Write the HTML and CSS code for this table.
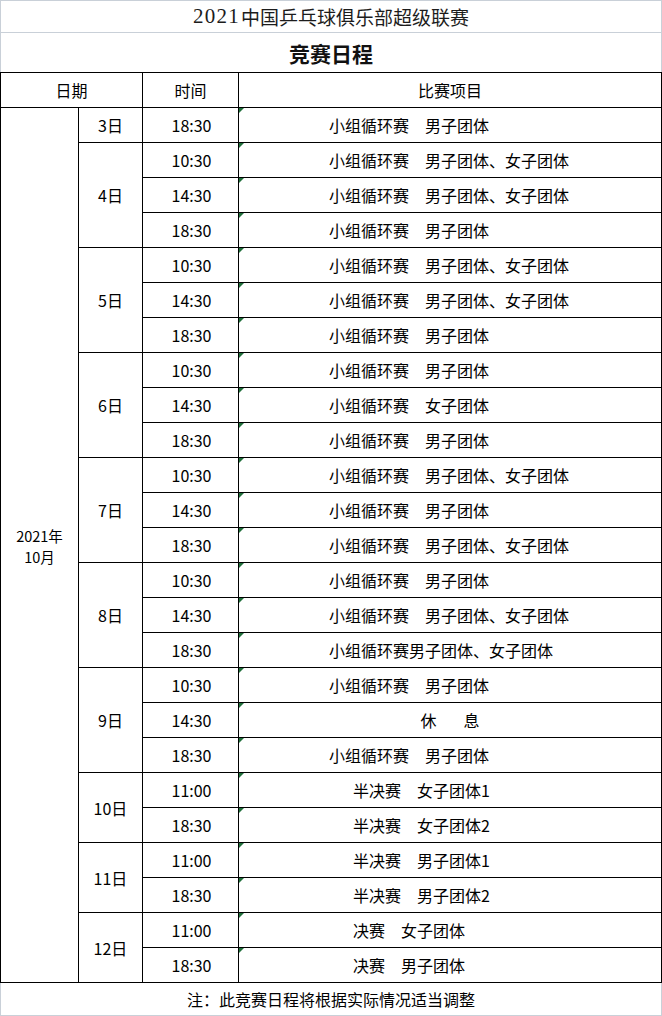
FILE: index.html
```html
<!DOCTYPE html>
<html lang="zh-CN">
<head>
<meta charset="utf-8">
<title>竞赛日程</title>
<link rel="stylesheet" href="styles.css">
</head>
<body>
<div class="sheet">
  <div class="title"><span class="year">2021</span>中国乒乓球俱乐部超级联赛</div>
  <div class="subtitle">竞赛日程</div>
  <div class="grid">
    <div class="c head h-date">日期</div>
    <div class="c head h-time">时间</div>
    <div class="c head h-item">比赛项目</div>
    <div class="c month"><span class="mline">2021年</span><span class="mline">10月</span></div>

    <div class="c day">3日</div>
    <div class="c time">18:30</div><div class="c item">小组循环赛　男子团体</div>

    <div class="c day span3">4日</div>
    <div class="c time">10:30</div><div class="c item">小组循环赛　男子团体、女子团体</div>
    <div class="c time">14:30</div><div class="c item">小组循环赛　男子团体、女子团体</div>
    <div class="c time">18:30</div><div class="c item">小组循环赛　男子团体</div>

    <div class="c day span3">5日</div>
    <div class="c time">10:30</div><div class="c item">小组循环赛　男子团体、女子团体</div>
    <div class="c time">14:30</div><div class="c item">小组循环赛　男子团体、女子团体</div>
    <div class="c time">18:30</div><div class="c item">小组循环赛　男子团体</div>

    <div class="c day span3">6日</div>
    <div class="c time">10:30</div><div class="c item">小组循环赛　男子团体</div>
    <div class="c time">14:30</div><div class="c item">小组循环赛　女子团体</div>
    <div class="c time">18:30</div><div class="c item">小组循环赛　男子团体</div>

    <div class="c day span3">7日</div>
    <div class="c time">10:30</div><div class="c item">小组循环赛　男子团体、女子团体</div>
    <div class="c time">14:30</div><div class="c item">小组循环赛　男子团体</div>
    <div class="c time">18:30</div><div class="c item">小组循环赛　男子团体、女子团体</div>

    <div class="c day span3">8日</div>
    <div class="c time">10:30</div><div class="c item">小组循环赛　男子团体</div>
    <div class="c time">14:30</div><div class="c item">小组循环赛　男子团体、女子团体</div>
    <div class="c time">18:30</div><div class="c item">小组循环赛男子团体、女子团体</div>

    <div class="c day span3">9日</div>
    <div class="c time">10:30</div><div class="c item">小组循环赛　男子团体</div>
    <div class="c time">14:30</div><div class="c item rest">休<span class="gap"></span>息</div>
    <div class="c time">18:30</div><div class="c item">小组循环赛　男子团体</div>

    <div class="c day span2">10日</div>
    <div class="c time">11:00</div><div class="c item final">半决赛　女子团体1</div>
    <div class="c time">18:30</div><div class="c item final">半决赛　女子团体2</div>

    <div class="c day span2">11日</div>
    <div class="c time">11:00</div><div class="c item final">半决赛　男子团体1</div>
    <div class="c time">18:30</div><div class="c item final">半决赛　男子团体2</div>

    <div class="c day span2">12日</div>
    <div class="c time">11:00</div><div class="c item final">决赛　女子团体</div>
    <div class="c time">18:30</div><div class="c item final">决赛　男子团体</div>
  </div>
  <div class="note">注：此竞赛日程将根据实际情况适当调整</div>
</div>
</body>
</html>
```
FILE: styles.css
```css
html, body {
  margin: 0;
  padding: 0;
  background: #ffffff;
}

.sheet {
  width: 662px;
  font-family: "Noto Sans CJK SC", sans-serif;
  font-size: 16px;
  color: #000;
}

.title {
  box-sizing: border-box;
  height: 33px;
  border: 1px solid #c9d0d8;
  display: flex;
  align-items: center;
  justify-content: center;
  font-family: "Liberation Serif", "Noto Sans CJK SC", serif;
  font-size: 19px;
  color: #1c1c1c;
}

.year {
  font-size: 21px;
  letter-spacing: 1.2px;
  margin-right: 1px;
}

.subtitle {
  box-sizing: border-box;
  height: 39px;
  border-left: 1px solid #c9d0d8;
  border-right: 1px solid #c9d0d8;
  display: flex;
  align-items: center;
  justify-content: center;
  font-size: 21px;
  font-weight: 700;
  color: #111;
}

.grid {
  display: grid;
  grid-template-columns: 77px 63px 95px 422px;
  grid-auto-rows: 34px;
  gap: 1px;
  padding: 1px;
  background: #000;
}

.c {
  background: #fff;
  display: flex;
  align-items: center;
  justify-content: center;
  line-height: 1;
}

.h-date { grid-column: 1 / span 2; grid-row: 1; }
.h-time { grid-column: 3; grid-row: 1; }
.h-item { grid-column: 4; grid-row: 1; }

.month {
  grid-column: 1;
  grid-row: 2 / span 25;
  flex-direction: column;
  font-size: 14.5px;
  padding-top: 2px;
}

.mline {
  display: block;
  line-height: 21px;
  text-align: center;
}

.day { grid-column: 2; }
.span2 { grid-row: span 2; }
.span3 { grid-row: span 3; }

.time {
  grid-column: 3;
  padding-left: 2px;
}

.item {
  grid-column: 4;
  position: relative;
  justify-content: flex-start;
  padding-left: 90px;
}

.item.final {
  padding-left: 114px;
}

.item.rest {
  justify-content: center;
  padding-left: 0;
}

.gap {
  display: inline-block;
  width: 27px;
}

.item::before {
  content: "";
  position: absolute;
  left: 0;
  top: 0;
  width: 0;
  height: 0;
  border-top: 5px solid #1f6f3a;
  border-right: 5px solid transparent;
}

.note {
  box-sizing: border-box;
  height: 33px;
  border-left: 1px solid #c9d0d8;
  border-right: 1px solid #c9d0d8;
  border-bottom: 1px solid #c9d0d8;
  display: flex;
  align-items: center;
  justify-content: center;
}
```
